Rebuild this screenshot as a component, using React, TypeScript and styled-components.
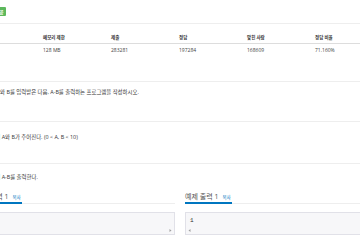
import React from 'react';
import styled, { createGlobalStyle } from 'styled-components';

const GlobalStyle = createGlobalStyle`
  html, body {
    margin: 0;
    padding: 0;
    background: #fff;
  }
  body {
    width: 360px;
    height: 240px;
    overflow: hidden;
    font-family: "Open Sans", "Noto Sans CJK KR", sans-serif;
    color: #333;
  }
`;

const Page = styled.div`
  width: 410px;
  margin-left: -25px;
`;

const TitleRow = styled.div`
  display: flex;
  align-items: flex-start;
  gap: 3px;
  height: 16px;
  padding-top: 7px;
  border-bottom: 1px solid #eee;
`;

const Title = styled.span`
  font-size: 9px;
  line-height: 9px;
`;

const Label = styled.span`
  display: inline-flex;
  align-items: center;
  height: 9px;
  padding: 0 2px;
  border-radius: 1px;
  background: #5cb85c;
  color: #fff;
  font-size: 5px;
  font-weight: 700;
`;

const InfoTable = styled.table`
  margin-top: 7px;
  margin-left: -4px;
  width: 408px;
  table-layout: fixed;
  border-collapse: collapse;

  th,
  td {
    height: 12px;
    padding: 0 4px;
    text-align: left;
    vertical-align: middle;
    white-space: nowrap;
  }

  th {
    font-size: 4.5px;
    font-weight: 700;
    border-bottom: 1px solid #ddd;
  }

  td {
    font-size: 5px;
    color: #444;
  }
`;

const Headline = styled.div<{ $gap: number }>`
  display: flex;
  align-items: flex-end;
  margin-top: ${(p) => p.$gap}px;
  padding-bottom: 2px;
  border-bottom: 1px solid #eee;

  h2 {
    margin: 0;
    font-size: 7px;
    line-height: 10px;
    font-weight: 400;
    color: #555;
  }
`;

const Text = styled.p<{ $gap: number }>`
  margin: ${(p) => p.$gap}px 0 0;
  padding-left: 4px;
  font-size: 5.4px;
  line-height: 8px;
  color: #333;
  white-space: nowrap;
`;

const SampleGrid = styled.div`
  display: grid;
  grid-template-columns: 200px 200px;
  column-gap: 10px;
  margin-top: 11px;
`;

const SampleHeadline = styled.div`
  display: flex;
  align-items: flex-end;
  border-bottom: 1px solid #eee;
`;

const SampleTitle = styled.h2`
  display: flex;
  align-items: baseline;
  gap: 4px;
  margin: 0 0 -1px;
  padding-right: 1px;
  font-size: 7px;
  line-height: 10px;
  font-weight: 400;
  color: #555;
  border-bottom: 2px solid #0076c0;
`;

const CopyLink = styled.a`
  font-size: 4.5px;
  color: #0076c0;
  text-decoration: none;
`;

const Pre = styled.div`
  margin-top: 8px;
  border: 1px solid #e1e1e8;
  background: #f7f7f9;
  height: 21px;
  display: flex;
  flex-direction: column;
`;

const Code = styled.pre`
  margin: 0;
  padding: 3px 4px 0;
  height: 10px;
  font-family: "Liberation Mono", monospace;
  font-size: 6px;
  line-height: 10px;
  color: #333;
`;

const ScrollTrack = styled.div<{ $side: 'left' | 'right' }>`
  flex: 1;
  display: flex;
  align-items: center;
  justify-content: ${(p) => (p.$side === 'left' ? 'flex-start' : 'flex-end')};
  padding: 0 2px;
`;

const Arrow = ({ dir }: { dir: 'left' | 'right' }) => (
  <svg width="3" height="3" viewBox="0 0 3 3">
    <path d={dir === 'left' ? 'M2.5 0 L0.5 1.5 L2.5 3 Z' : 'M0.5 0 L2.5 1.5 L0.5 3 Z'} fill="#a0a0a0" />
  </svg>
);

const stats = ['2 초', '128 MB', '283281', '197284', '168609', '71.160%'];
const heads = ['시간 제한', '메모리 제한', '제출', '정답', '맞힌 사람', '정답 비율'];

export default function App() {
  return (
    <>
      <GlobalStyle />
      <Page>
        <TitleRow>
          <Title>A-B</Title>
          <Label>성공</Label>
        </TitleRow>

        <InfoTable>
          <thead>
            <tr>
              {heads.map((h) => (
                <th key={h}>{h}</th>
              ))}
            </tr>
          </thead>
          <tbody>
            <tr>
              {stats.map((s) => (
                <td key={s}>{s}</td>
              ))}
            </tr>
          </tbody>
        </InfoTable>

        <Headline $gap={13}>
          <h2>문제</h2>
        </Headline>
        <Text $gap={6}>두 정수 A와 B를 입력받은 다음, A-B를 출력하는 프로그램을 작성하시오.</Text>

        <Headline $gap={13}>
          <h2>입력</h2>
        </Headline>
        <Text $gap={11}>첫째 줄에 A와 B가 주어진다. (0 &lt; A, B &lt; 10)</Text>

        <Headline $gap={10}>
          <h2>출력</h2>
        </Headline>
        <Text $gap={9}>첫째 줄에 A-B를 출력한다.</Text>

        <SampleGrid>
          <div>
            <SampleHeadline>
              <SampleTitle>
                예제 입력 1 <CopyLink href="#">복사</CopyLink>
              </SampleTitle>
            </SampleHeadline>
            <Pre>
              <Code>3 2</Code>
              <ScrollTrack $side="right">
                <Arrow dir="right" />
              </ScrollTrack>
            </Pre>
          </div>
          <div>
            <SampleHeadline>
              <SampleTitle>
                예제 출력 1 <CopyLink href="#">복사</CopyLink>
              </SampleTitle>
            </SampleHeadline>
            <Pre>
              <Code>1</Code>
              <ScrollTrack $side="left">
                <Arrow dir="left" />
              </ScrollTrack>
            </Pre>
          </div>
        </SampleGrid>
      </Page>
    </>
  );
}
